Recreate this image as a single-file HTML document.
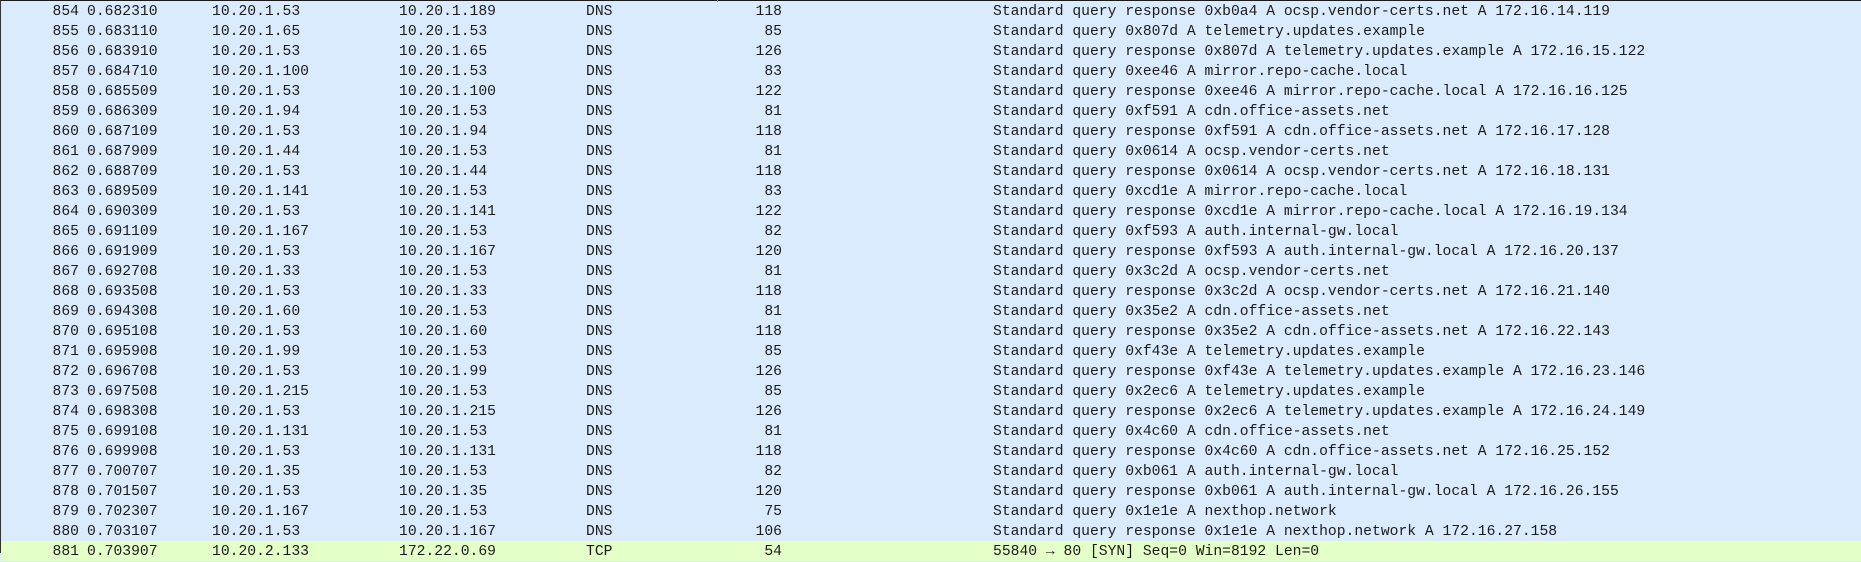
<!DOCTYPE html>
<html><head><meta charset="utf-8"><style>
html,body{margin:0;padding:0;}
body{width:1861px;height:553px;overflow:hidden;background:#daebfd;position:relative;font-family:"Liberation Mono",monospace;font-size:14.7px;color:#1c1c1c;}
.top{position:absolute;left:0;top:0;width:1861px;height:1px;background:#1a1a1a;}
.lft{position:absolute;left:0;top:0;width:1px;height:553px;background:#333;}
.notch{position:absolute;left:717px;top:0;width:1px;height:2px;background:#888;}
.r{position:absolute;left:1px;width:1860px;height:20px;line-height:20px;white-space:pre;}
.r span{position:absolute;top:1px;}
.n{right:1782px;text-align:right;}
.t{left:86px}.s{left:211px}.d{left:398px}.p{left:585px}
.l{right:1079px;text-align:right}.i{left:992px}
.g{background:#e4ffc7;}
</style></head><body>
<div class="top"></div><div class="lft"></div><div class="notch"></div>
<div id="rows"></div>
<script>
var d=[
["854","0.682310","10.20.1.53","10.20.1.189","DNS","118","Standard query response 0xb0a4 A ocsp.vendor-certs.net A 172.16.14.119"],
["855","0.683110","10.20.1.65","10.20.1.53","DNS","85","Standard query 0x807d A telemetry.updates.example"],
["856","0.683910","10.20.1.53","10.20.1.65","DNS","126","Standard query response 0x807d A telemetry.updates.example A 172.16.15.122"],
["857","0.684710","10.20.1.100","10.20.1.53","DNS","83","Standard query 0xee46 A mirror.repo-cache.local"],
["858","0.685509","10.20.1.53","10.20.1.100","DNS","122","Standard query response 0xee46 A mirror.repo-cache.local A 172.16.16.125"],
["859","0.686309","10.20.1.94","10.20.1.53","DNS","81","Standard query 0xf591 A cdn.office-assets.net"],
["860","0.687109","10.20.1.53","10.20.1.94","DNS","118","Standard query response 0xf591 A cdn.office-assets.net A 172.16.17.128"],
["861","0.687909","10.20.1.44","10.20.1.53","DNS","81","Standard query 0x0614 A ocsp.vendor-certs.net"],
["862","0.688709","10.20.1.53","10.20.1.44","DNS","118","Standard query response 0x0614 A ocsp.vendor-certs.net A 172.16.18.131"],
["863","0.689509","10.20.1.141","10.20.1.53","DNS","83","Standard query 0xcd1e A mirror.repo-cache.local"],
["864","0.690309","10.20.1.53","10.20.1.141","DNS","122","Standard query response 0xcd1e A mirror.repo-cache.local A 172.16.19.134"],
["865","0.691109","10.20.1.167","10.20.1.53","DNS","82","Standard query 0xf593 A auth.internal-gw.local"],
["866","0.691909","10.20.1.53","10.20.1.167","DNS","120","Standard query response 0xf593 A auth.internal-gw.local A 172.16.20.137"],
["867","0.692708","10.20.1.33","10.20.1.53","DNS","81","Standard query 0x3c2d A ocsp.vendor-certs.net"],
["868","0.693508","10.20.1.53","10.20.1.33","DNS","118","Standard query response 0x3c2d A ocsp.vendor-certs.net A 172.16.21.140"],
["869","0.694308","10.20.1.60","10.20.1.53","DNS","81","Standard query 0x35e2 A cdn.office-assets.net"],
["870","0.695108","10.20.1.53","10.20.1.60","DNS","118","Standard query response 0x35e2 A cdn.office-assets.net A 172.16.22.143"],
["871","0.695908","10.20.1.99","10.20.1.53","DNS","85","Standard query 0xf43e A telemetry.updates.example"],
["872","0.696708","10.20.1.53","10.20.1.99","DNS","126","Standard query response 0xf43e A telemetry.updates.example A 172.16.23.146"],
["873","0.697508","10.20.1.215","10.20.1.53","DNS","85","Standard query 0x2ec6 A telemetry.updates.example"],
["874","0.698308","10.20.1.53","10.20.1.215","DNS","126","Standard query response 0x2ec6 A telemetry.updates.example A 172.16.24.149"],
["875","0.699108","10.20.1.131","10.20.1.53","DNS","81","Standard query 0x4c60 A cdn.office-assets.net"],
["876","0.699908","10.20.1.53","10.20.1.131","DNS","118","Standard query response 0x4c60 A cdn.office-assets.net A 172.16.25.152"],
["877","0.700707","10.20.1.35","10.20.1.53","DNS","82","Standard query 0xb061 A auth.internal-gw.local"],
["878","0.701507","10.20.1.53","10.20.1.35","DNS","120","Standard query response 0xb061 A auth.internal-gw.local A 172.16.26.155"],
["879","0.702307","10.20.1.167","10.20.1.53","DNS","75","Standard query 0x1e1e A nexthop.network"],
["880","0.703107","10.20.1.53","10.20.1.167","DNS","106","Standard query response 0x1e1e A nexthop.network A 172.16.27.158"],
["881","0.703907","10.20.2.133","172.22.0.69","TCP","54","55840 \u2192 80 [SYN] Seq=0 Win=8192 Len=0"]
];
var h="",c=["n","t","s","d","p","l","i"];
d.forEach(function(r,k){h+='<div class="r'+(k==27?' g':'')+'" style="top:'+(1+k*20)+'px">';r.forEach(function(v,j){h+='<span class="'+c[j]+'">'+v+'</span>';});h+='</div>';});
document.getElementById("rows").innerHTML=h;
</script>
</body></html>
